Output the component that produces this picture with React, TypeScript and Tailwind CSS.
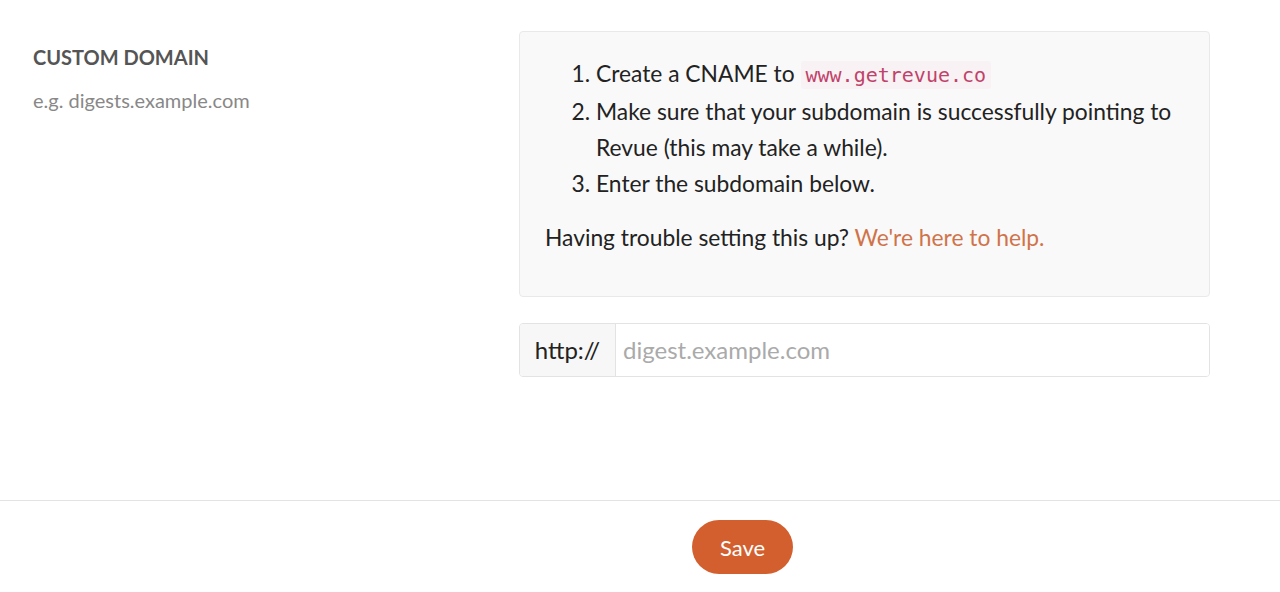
export default function App() {
  return (
    <div className="w-[1280px] h-[592px] bg-white font-['Lato',sans-serif] flex flex-col overflow-hidden">
      <div className="flex pl-[33px] pt-[31px] h-[500px] shrink-0">
        <div className="w-[486px] pt-[14px]">
          <div className="text-[20px] font-bold text-[#555] leading-[24px]">CUSTOM DOMAIN</div>
          <div className="text-[20px] text-[#888] leading-[24px] mt-[19px]">e.g. digests.example.com</div>
        </div>
        <div className="w-[691px]">
          <div className="bg-[#f9f9f9] border border-[#e9e9e9] rounded-[4px] h-[266px] pl-[25px] pr-[20px] pt-[23px] text-[22.8px] text-[#222] leading-[36px]">
            <ol className="list-decimal pl-[51px]">
              <li>
                Create a CNAME to{" "}
                <code className="font-['DejaVu_Sans_Mono',monospace] text-[20px] text-[#c0426a] bg-[#f9f2f4] px-[5px] py-[2px] rounded-[3px]">www.getrevue.co</code>
              </li>
              <li>Make sure that your subdomain is successfully pointing to Revue (this may take a while).</li>
              <li>Enter the subdomain below.</li>
            </ol>
            <p className="mt-[18px]">
              Having trouble setting this up? <a className="text-[#d0734a]">We're here to help.</a>
            </p>
          </div>
          <div className="mt-[26px] flex h-[54px] border border-[#e3e3e3] rounded-[4px] overflow-hidden text-[24px]">
            <div className="w-[96px] bg-[#f7f7f7] border-r border-[#e3e3e3] flex items-center justify-center text-[#222]">http://</div>
            <div className="flex-1 bg-white flex items-center pl-[7px] text-[#aaa]">digest.example.com</div>
          </div>
        </div>
      </div>
      <div className="border-t border-[#e3e3e3] flex justify-center pl-[205px] pt-[19px]">
        <button className="w-[101px] h-[54px] rounded-full bg-[#d35f2e] text-white text-[22px]">Save</button>
      </div>
    </div>
  );
}
